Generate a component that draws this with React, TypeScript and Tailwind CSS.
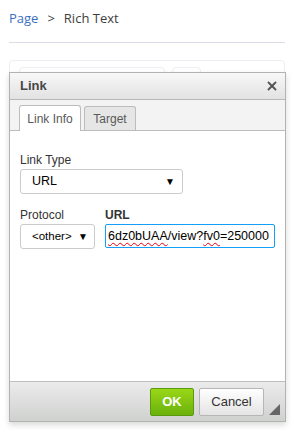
import { X } from 'lucide-react';

function Arrow() {
  return <span className="text-[10px] leading-none text-black">▼</span>;
}

export default function App() {
  return (
    <div className="relative h-[433px] w-[294px] overflow-hidden bg-white">
      <div className="px-[9px] pt-[9px] font-['Open_Sans',sans-serif] text-[13px] leading-[18px]">
        <span className="text-[#3a6fc4]">Page</span>
        <span className="mx-[9px] text-[#3e3e3c]">&gt;</span>
        <span className="text-[#3e3e3c]">Rich Text</span>
      </div>
      <div className="mx-[9px] mt-[15px] h-px bg-[#dcdde9]" />
      <div className="mx-[9px] mt-[17px] h-[330px] rounded-t border border-[#eceef3] px-[9px] pt-[6px]">
        <div className="flex gap-[7px]">
          <div className="h-[30px] w-[146px] rounded border border-[#eceef3]" />
          <div className="h-[30px] w-[29px] rounded border border-[#eceef3]" />
        </div>
      </div>

      {/* dialog overlay */}
      <div className="absolute left-[9px] top-[72px] flex h-[350px] w-[277px] flex-col border border-[#b2b2b2] bg-white font-['Liberation_Sans',Arial,sans-serif] shadow-[0_3px_6px_rgba(0,0,0,0.15)]">
        <div className="flex h-[27px] items-center justify-between border-b border-[#b8b8b8] bg-gradient-to-b from-[#f8f8f8] to-[#e2e2e2] pl-[10px] pr-[6px]">
          <span className="text-[13px] font-bold text-[#474747]">Link</span>
          <X size={14} strokeWidth={3.2} className="text-[#555]" />
        </div>
        <div className="flex h-[31px] items-end gap-[3px] border-b border-[#bcbcbc] bg-[#f3f3f3] pl-[9px]">
          <div className="-mb-px flex h-[26px] w-[62px] items-center justify-center rounded-t-[3px] border border-b-0 border-[#bcbcbc] bg-white text-[12px] text-[#595959]">
            Link Info
          </div>
          <div className="flex h-[24px] w-[52px] items-center justify-center rounded-t-[3px] border border-b-0 border-[#bcbcbc] bg-[#e6e6e6] text-[12px] text-[#595959]">
            Target
          </div>
        </div>
        <div className="flex-1 px-[10px] pt-[22px] text-[12px] text-[#333]">
          <div className="leading-[15px]">Link Type</div>
          <div className="mt-[1px] flex h-[25px] w-[163px] items-center justify-between rounded-[3px] border border-[#c9cccf] bg-white pl-[11px] pr-[7px] text-[12.5px] text-black">
            <span>URL</span>
            <Arrow />
          </div>
          <div className="mt-[14px] flex gap-[10px]">
            <div>
              <div className="leading-[15px]">Protocol</div>
              <div className="mt-[1px] flex h-[25px] w-[75px] items-center justify-between rounded-[3px] border border-[#c9cccf] bg-white pl-[11px] pr-[6px] text-[11.5px] text-black">
                <span>&lt;other&gt;</span>
                <Arrow />
              </div>
            </div>
            <div>
              <div className="font-bold leading-[15px]">URL</div>
              <div className="mt-[1px] flex h-[24px] w-[170px] items-center overflow-hidden rounded-[2px] border border-[#139ff7] bg-white pl-[2px] text-[12.5px] whitespace-nowrap text-black">
                <span className="underline decoration-red-600 decoration-wavy decoration-1 underline-offset-2">6dz0bUAA</span>
                <span>/view?</span>
                <span className="underline decoration-red-600 decoration-wavy decoration-1 underline-offset-2">fv0</span>
                <span>=250000</span>
              </div>
            </div>
          </div>
        </div>
        <div className="flex h-[40px] items-center justify-end gap-[5px] border-t border-[#bfbfbf] bg-gradient-to-b from-[#ebebeb] to-[#cfd1cf] pr-[21px]">
          <div className="flex h-[28px] w-[44px] items-center justify-center rounded-[2px] border border-[#5b9a0d] bg-gradient-to-b from-[#9ad717] to-[#69b10b] text-[13px] font-bold text-white">
            OK
          </div>
          <div className="flex h-[28px] w-[65px] items-center justify-center rounded-[2px] border border-[#b6b6b6] bg-gradient-to-b from-white to-[#e4e4e4] text-[13px] text-[#333]">
            Cancel
          </div>
          <svg className="absolute bottom-[6px] right-[5px]" width="11" height="11" viewBox="0 0 11 11">
            <polygon points="11,0 11,11 0,11" fill="#666" />
          </svg>
        </div>
      </div>
    </div>
  );
}
